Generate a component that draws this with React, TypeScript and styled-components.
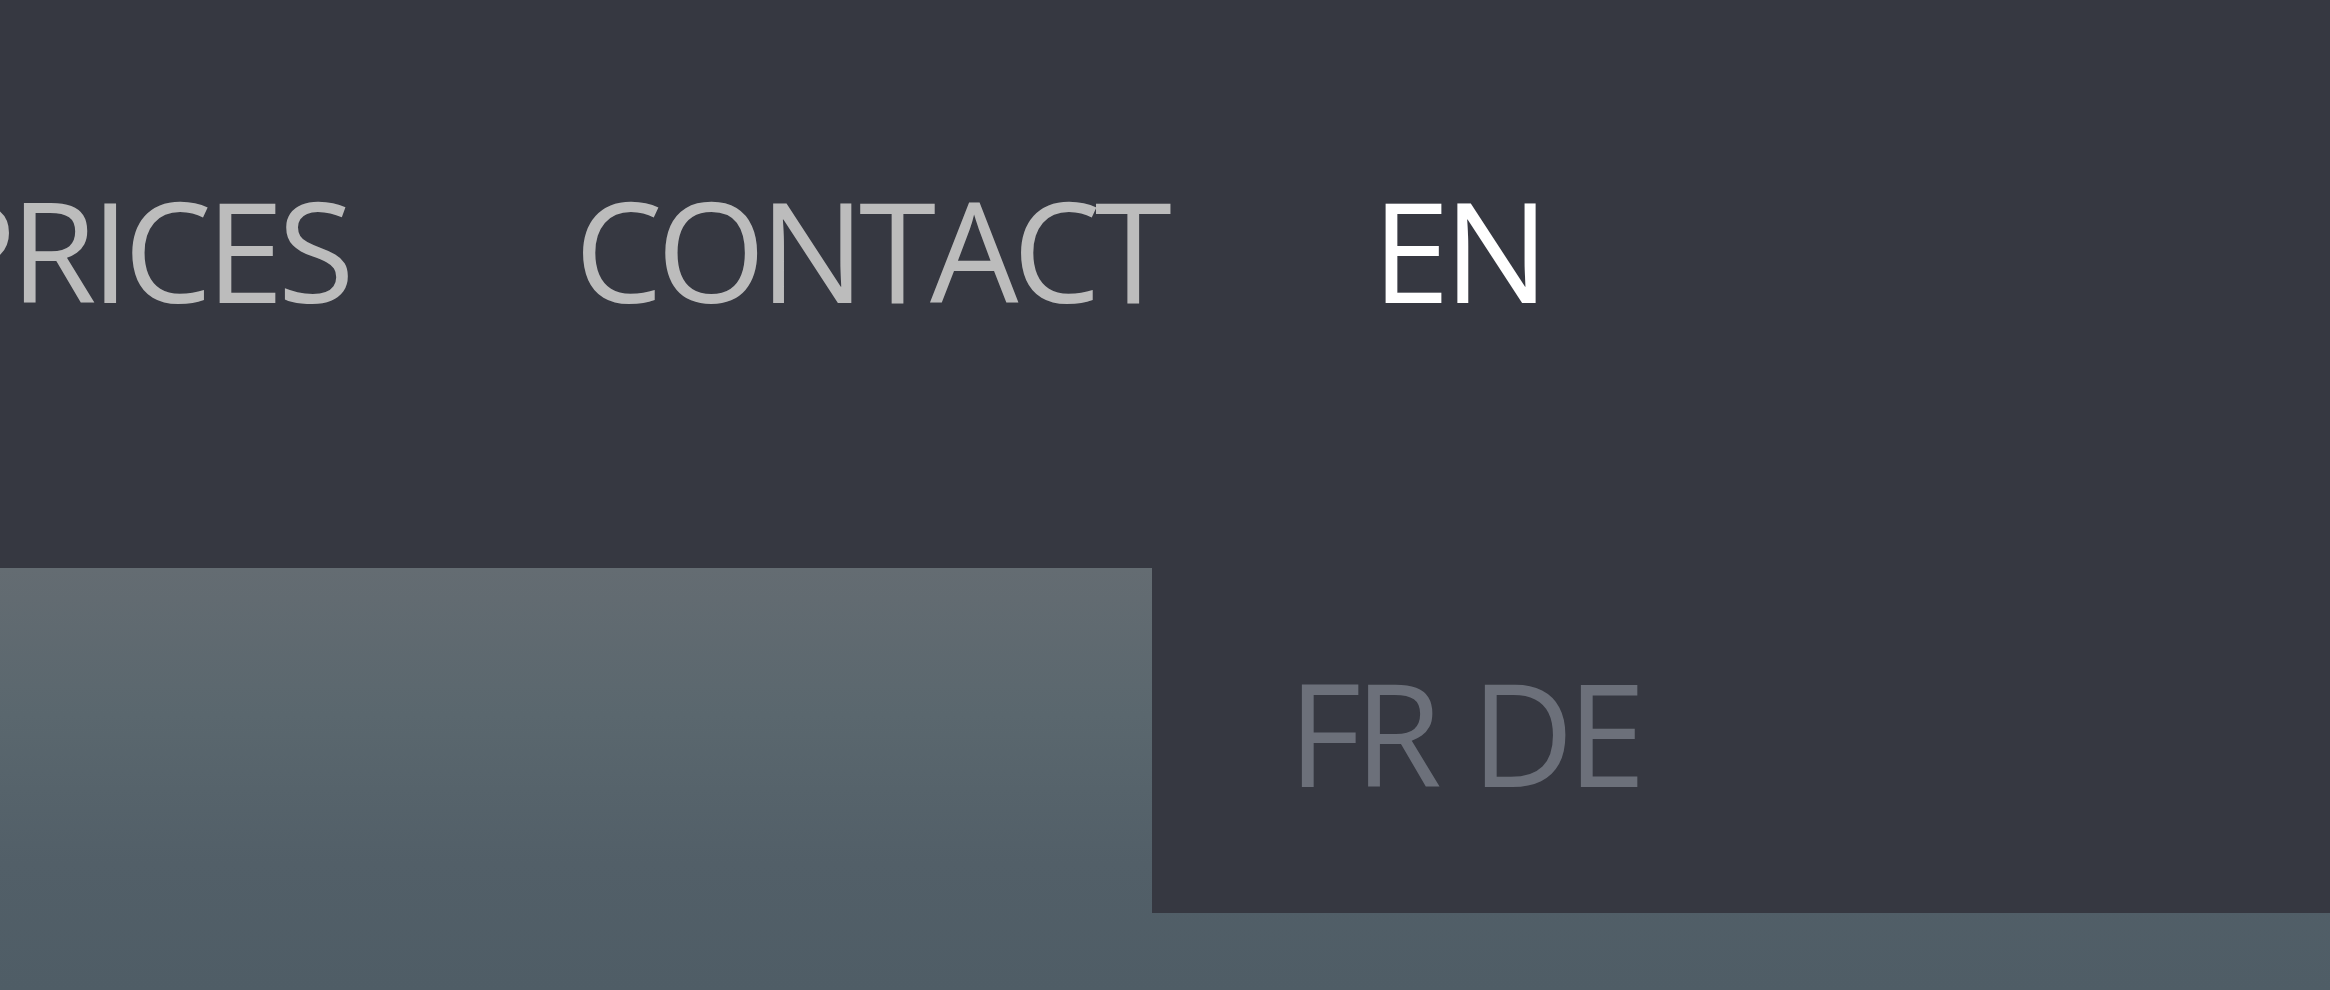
import React from "react";
import styled, { createGlobalStyle } from "styled-components";

const Global = createGlobalStyle`
  html, body { margin: 0; padding: 0; background: #363841; }
  body { font-family: "Open Sans", "DejaVu Sans", sans-serif; }
`;

const Page = styled.div`
  width: 2330px;
  height: 990px;
  overflow: hidden;
  background: #363841;
  display: flex;
  flex-direction: column;
`;

const Header = styled.header`
  height: 568px;
  flex: none;
  display: flex;
  align-items: flex-start;
  padding-top: 179px;
  box-sizing: border-box;
`;

const Nav = styled.nav`
  display: flex;
  align-items: flex-start;
  gap: 206px;
  margin-left: -68px;
`;

const NavLink = styled.a<{ $active?: boolean }>`
  font-family: "Open Sans", "DejaVu Sans", sans-serif;
  font-weight: 400;
  font-size: 140px;
  line-height: 1;
  letter-spacing: -6px;
  color: ${(p) => (p.$active ? "#ffffff" : "#bcbcbc")};
  text-decoration: none;
  white-space: nowrap;

  &:first-child {
    margin-right: 20px;
  }
`;

const Hero = styled.section`
  flex: 1;
  display: flex;
  background: linear-gradient(180deg, #646c72 0%, #5a676e 35%, #525f68 70%, #4f5d66 100%);
`;

const HeroImage = styled.div`
  width: 1152px;
  flex: none;
`;

const LangPanel = styled.div`
  flex: 1;
  height: 345px;
  background: #363841;
  padding: 93px 0 0 136px;
  box-sizing: border-box;
  display: flex;
  align-items: flex-start;
  gap: 36px;
`;

const LangLink = styled.a`
  font-family: "Open Sans", "DejaVu Sans", sans-serif;
  font-weight: 400;
  font-size: 142px;
  line-height: 1;
  letter-spacing: -7px;
  color: #6c707a;
  text-decoration: none;
  white-space: nowrap;
`;

export default function App() {
  return (
    <>
      <Global />
      <Page>
        <Header>
          <Nav>
            <NavLink href="#">PRICES</NavLink>
            <NavLink href="#">CONTACT</NavLink>
            <NavLink href="#" $active>
              EN
            </NavLink>
          </Nav>
        </Header>
        <Hero>
          <HeroImage />
          <LangPanel>
            <LangLink href="#">FR</LangLink>
            <LangLink href="#">DE</LangLink>
          </LangPanel>
        </Hero>
      </Page>
    </>
  );
}
